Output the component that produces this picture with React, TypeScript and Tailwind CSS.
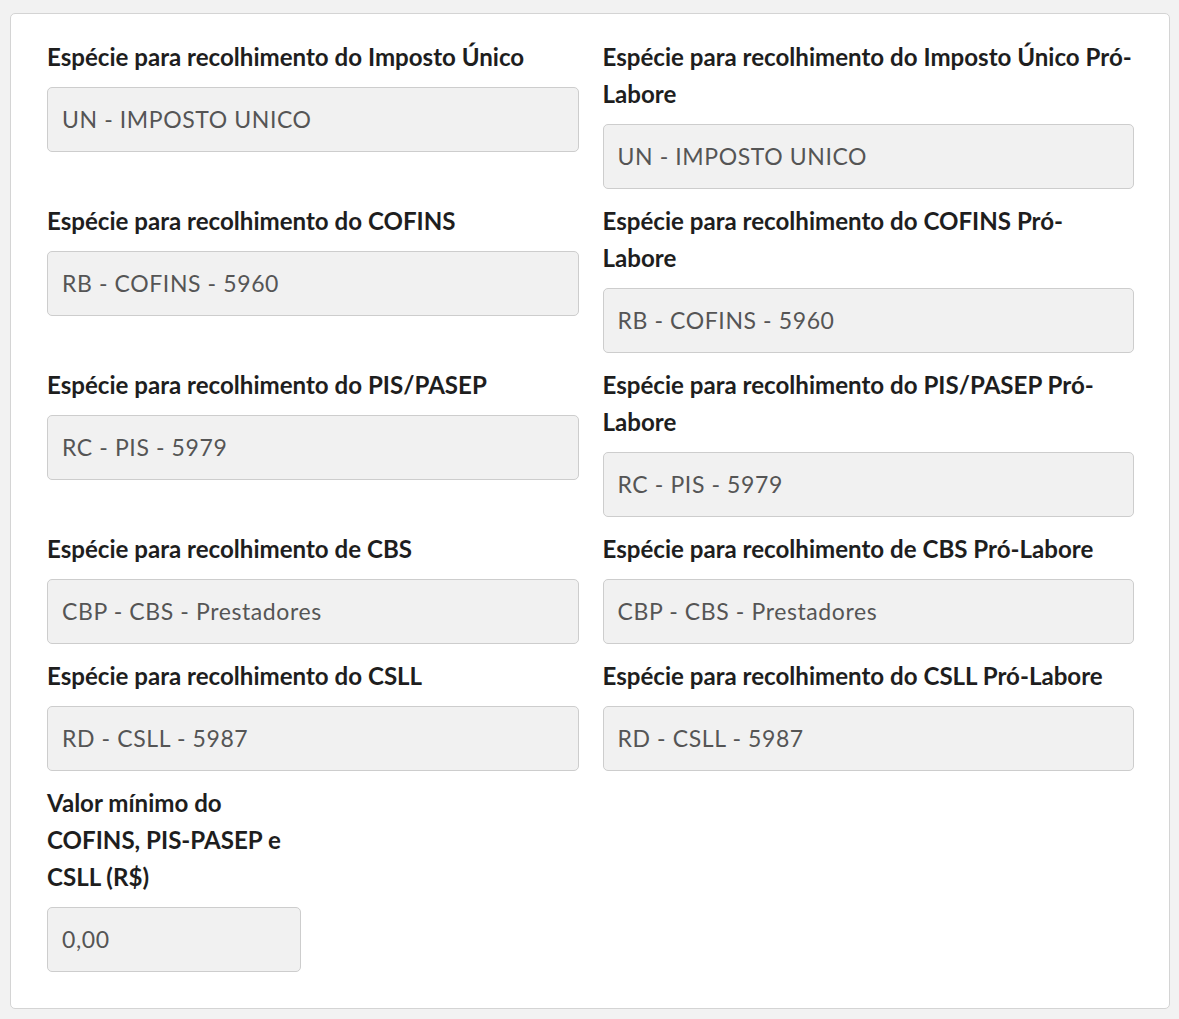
const fields = [
  { label: "Espécie para recolhimento do Imposto Único", value: "UN - IMPOSTO UNICO" },
  { label: "Espécie para recolhimento do Imposto Único Pró-Labore", value: "UN - IMPOSTO UNICO" },
  { label: "Espécie para recolhimento do COFINS", value: "RB - COFINS - 5960" },
  { label: "Espécie para recolhimento do COFINS Pró-Labore", value: "RB - COFINS - 5960" },
  { label: "Espécie para recolhimento do PIS/PASEP", value: "RC - PIS - 5979" },
  { label: "Espécie para recolhimento do PIS/PASEP Pró-Labore", value: "RC - PIS - 5979" },
  { label: "Espécie para recolhimento de CBS", value: "CBP - CBS - Prestadores" },
  { label: "Espécie para recolhimento de CBS Pró-Labore", value: "CBP - CBS - Prestadores" },
  { label: "Espécie para recolhimento do CSLL", value: "RD - CSLL - 5987" },
  { label: "Espécie para recolhimento do CSLL Pró-Labore", value: "RD - CSLL - 5987" },
];

function Field({ label, value, className }: { label: string; value: string; className?: string }) {
  return (
    <div className={className}>
      <label className="block text-[24.1px] font-bold leading-[37px] text-[#1e1e1e]">{label}</label>
      <div className="mt-3 flex h-[65px] items-center rounded-[5px] border border-[#cdcdcd] bg-[#f1f1f1] px-[14px] text-[23px] tracking-[0.6px] text-[#555]">
        {value}
      </div>
    </div>
  );
}

export default function App() {
  return (
    <div className="min-h-screen bg-[#f2f2f2] pl-[10px] pr-[9px] pt-[13px] font-['Lato','Noto_Sans',sans-serif]">
      <div className="rounded-[5px] border border-[#d4d4d4] bg-white pb-[36px] pl-[36px] pr-[35px] pt-[24px]">
        <div className="grid grid-cols-4 gap-x-6 gap-y-[13px]">
          {fields.map((f, i) => (
            <Field key={i} label={f.label} value={f.value} className="col-span-2" />
          ))}
          <Field label="Valor mínimo do COFINS, PIS-PASEP e CSLL (R$)" value="0,00" />
        </div>
      </div>
    </div>
  );
}
